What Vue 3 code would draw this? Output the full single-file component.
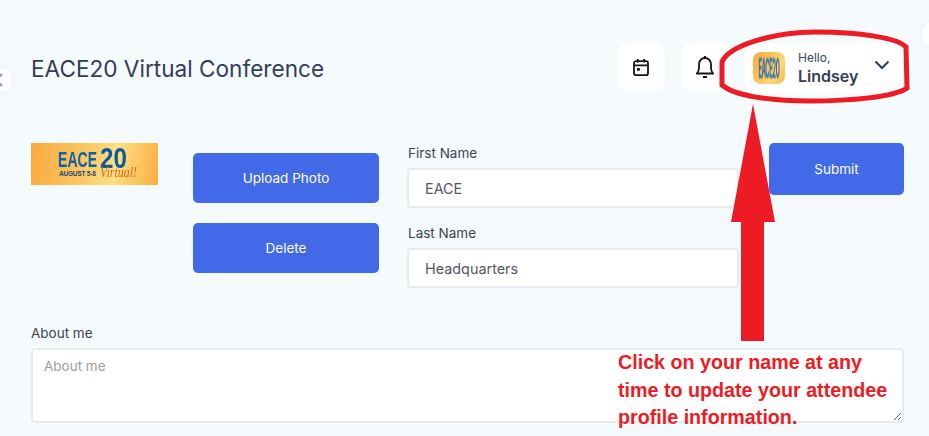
<template>
  <div class="page">
    <button class="side-toggle left" aria-label="Collapse">
      <svg width="12" height="16" viewBox="0 0 12 16"><path d="M9 2 3 8l6 6" fill="none" stroke="#9a9fb0" stroke-width="2.4"/></svg>
    </button>
    <span class="side-toggle right"></span>

    <header class="topbar">
      <h1>EACE20 Virtual Conference</h1>
      <div class="actions">
        <button class="tile" aria-label="Calendar">
          <svg width="18" height="19" viewBox="0 0 18 19" fill="none" stroke="#14151c" stroke-width="1.8">
            <rect x="2" y="3.200" width="14" height="14" rx="2" />
            <path d="M2 7.400h14M5.800 1v3.500M12.200 1v3.500" />
            <rect x="5" y="10" width="2.800" height="2.800" fill="#14151c" stroke="none" />
          </svg>
        </button>
        <button class="tile" aria-label="Notifications">
          <svg width="20" height="24" viewBox="0 0 20 24" fill="none" stroke="#14151c" stroke-width="1.800">
            <path d="M1.800 18.500h16.400c-1.500-1.600-2.200-3.200-2.200-5.500V9a6 6 0 0 0-12 0v4c0 2.300-.7 3.900-2.200 5.500Z" stroke-linejoin="round" />
            <path d="M10 3V1M8 22h4" stroke-width="2.200" />
          </svg>
        </button>
        <div class="profile">
          <div class="avatar"><span>EACE20</span></div>
          <div class="who">
            <span class="hello">Hello,</span>
            <strong>Lindsey</strong>
          </div>
          <svg class="chev" width="16" height="10" viewBox="0 0 16 10"><path d="m1.500 1.500 6.500 6.500 6.500-6.500" fill="none" stroke="#2f3a5f" stroke-width="2"/></svg>
        </div>
      </div>
    </header>

    <form class="form" @submit.prevent>
      <div class="photo-row">
        <div class="logo">
          <span class="eace">EACE</span>
          <span class="twenty">20</span>
          <span class="logo-date">AUGUST 5-8</span>
          <span class="logo-virtual">Virtual!</span>
        </div>
        <div class="photo-btns">
          <button class="btn">Upload Photo</button>
          <button class="btn">Delete</button>
        </div>
        <div class="names">
          <div class="field">
            <label for="firstName">First Name</label>
            <input id="firstName" type="text" v-model="firstName" />
          </div>
          <div class="field">
            <label for="lastName">Last Name</label>
            <input id="lastName" type="text" v-model="lastName" />
          </div>
        </div>
        <button class="btn submit">Submit</button>
      </div>

      <div class="field about">
        <label for="about">About me</label>
        <textarea id="about" placeholder="About me"></textarea>
      </div>
    </form>

    <!-- red annotation drawn over the page -->
    <svg class="callout" width="929" height="436" viewBox="0 0 929 436">
      <path d="M722 62C729 45 775 32 815 32 860 32 898 38 906 47L907 88C895 97 850 101 810 101 770 101 735 96 722 85Z" fill="none" stroke="#ed1c24" stroke-width="5" />
      <path d="M753 104 775 222H764V341H741V222H731Z" fill="#ed1c24" />
    </svg>
    <p class="note">Click on your name at any<br />time to update your attendee<br />profile information.</p>
  </div>
</template>

<script setup>
import { ref } from 'vue'

const firstName = ref('EACE')
const lastName = ref('Headquarters')
</script>

<style>
html, body {
  margin: 0;
  background: #f5fafd;
}
</style>

<style scoped>
.page {
  position: relative;
  width: 929px;
  height: 436px;
  overflow: hidden;
  box-sizing: border-box;
  padding: 43px 24px 0 31px;
  background: #f5fafd;
  font-family: Inter, "Liberation Sans", sans-serif;
  color: #3b4254;
}

.side-toggle {
  position: absolute;
  width: 24px;
  height: 24px;
  padding: 0;
  border: 0;
  border-radius: 50%;
  background: #fff;
  box-shadow: 0 0 10px rgba(60, 70, 100, 0.06);
}
.side-toggle.left {
  left: -12px;
  top: 68px;
  display: flex;
  align-items: center;
  justify-content: flex-end;
  padding-right: 7px;
  box-sizing: border-box;
}
.side-toggle.right {
  left: 922px;
  top: 22px;
}

.topbar {
  display: flex;
  align-items: flex-start;
  justify-content: space-between;
  height: 50px;
}
.topbar h1 {
  margin: 11px 0 0;
  font-size: 22.600px;
  line-height: 30px;
  font-weight: 400;
  color: #333c5c;
}
.actions {
  display: flex;
  gap: 16px;
}
.tile {
  display: flex;
  align-items: center;
  justify-content: center;
  width: 48px;
  height: 48px;
  padding: 0;
  border: 0;
  border-radius: 10px;
  background: #fff;
}
.profile {
  display: flex;
  align-items: center;
  width: 160px;
  height: 50px;
  box-sizing: border-box;
  padding-left: 8px;
  border-radius: 10px;
  background: #fff;
}
.avatar {
  display: flex;
  align-items: center;
  justify-content: center;
  width: 32px;
  height: 32px;
  overflow: hidden;
  border-radius: 8px;
  background: linear-gradient(120deg, #f6a93c, #fdd873 70%, #f8b44a);
}
.avatar span {
  font-size: 12px;
  font-weight: 700;
  letter-spacing: -1px;
  color: #2a6aa8;
  transform: scale(0.5, 2.200);
  filter: blur(0.5px);
}
.who {
  display: flex;
  flex-direction: column;
  margin-left: 13px;
  width: 75px;
}
.hello {
  font-size: 12px;
  line-height: 15px;
  color: #3b4568;
}
.who strong {
  font-size: 16px;
  line-height: 22px;
  font-weight: 600;
  color: #333c5c;
}
.chev {
  margin: -6px 0 0 1px;
}

.form {
  display: flex;
  flex-direction: column;
  margin-right: 1px;
}
.photo-row {
  display: flex;
  align-items: flex-start;
  margin-top: 50px;
  height: 183px;
}
.logo {
  position: relative;
  width: 127px;
  height: 42px;
  flex: none;
  overflow: hidden;
  background: linear-gradient(100deg, #f9a93f 0%, #fcc55f 40%, #fee083 65%, #f9ae42 100%);
  font-family: "Liberation Sans", sans-serif;
}
.eace {
  position: absolute;
  left: 27px;
  top: 9px;
  font-size: 22px;
  line-height: 16px;
  font-weight: 700;
  color: #0d63a8;
  transform: scaleX(0.64);
  transform-origin: left;
}
.twenty {
  position: absolute;
  left: 69px;
  top: 4px;
  font-size: 29.500px;
  line-height: 22px;
  font-weight: 700;
  color: #0b5a9e;
  transform: scaleX(0.82);
  transform-origin: left;
}
.logo-date {
  position: absolute;
  left: 28px;
  top: 28px;
  font-size: 6.500px;
  line-height: 6px;
  font-weight: 700;
  letter-spacing: -0.2px;
  color: #17477c;
}
.logo-virtual {
  position: absolute;
  left: 69px;
  top: 23px;
  font-family: "Liberation Serif", serif;
  font-size: 15px;
  line-height: 12px;
  font-style: italic;
  color: #d8661f;
  transform: scaleX(0.8);
  transform-origin: left;
}
.photo-btns {
  display: flex;
  flex-direction: column;
  gap: 20px;
  margin: 10px 0 0 35px;
}
.btn {
  width: 186px;
  height: 50px;
  padding: 0 0 1px;
  border: 0;
  border-radius: 5px;
  background: #4169e8;
  color: #fff;
  font: 400 13.500px Inter, "Liberation Sans", sans-serif;
}
.submit {
  width: 135px;
  height: 52px;
  margin-left: 30px;
}
.names {
  display: flex;
  flex-direction: column;
  gap: 18px;
  width: 332px;
  margin: 3px 0 0 28px;
}
.field label {
  display: block;
  margin-bottom: 7px;
  font-size: 13.500px;
  line-height: 15px;
  color: #3b4254;
}
.names label {
  padding-left: 1px;
}
.field input {
  display: block;
  width: 100%;
  height: 40px;
  box-sizing: border-box;
  padding: 0 16px;
  border: 2px solid #e6ebef;
  border-radius: 4px;
  outline: 0;
  background: #fff;
  color: #5a5560;
  font: 400 14.400px Inter, "Liberation Sans", sans-serif;
}
.about textarea {
  display: block;
  width: 100%;
  height: 75px;
  box-sizing: border-box;
  padding: 8px 11px;
  border: 2px solid #e6ebef;
  border-radius: 4px;
  outline: 0;
  background: #fff;
  font: 400 13.500px Inter, "Liberation Sans", sans-serif;
}
.about textarea::placeholder {
  color: #a09c9c;
  opacity: 1;
}

.callout {
  position: absolute;
  left: 0;
  top: 0;
  pointer-events: none;
}
.note {
  position: absolute;
  left: 618px;
  top: 349px;
  margin: 0;
  font: 700 19.700px/27.500px "Liberation Sans", sans-serif;
  color: #ed1c24;
  white-space: nowrap;
}
</style>
